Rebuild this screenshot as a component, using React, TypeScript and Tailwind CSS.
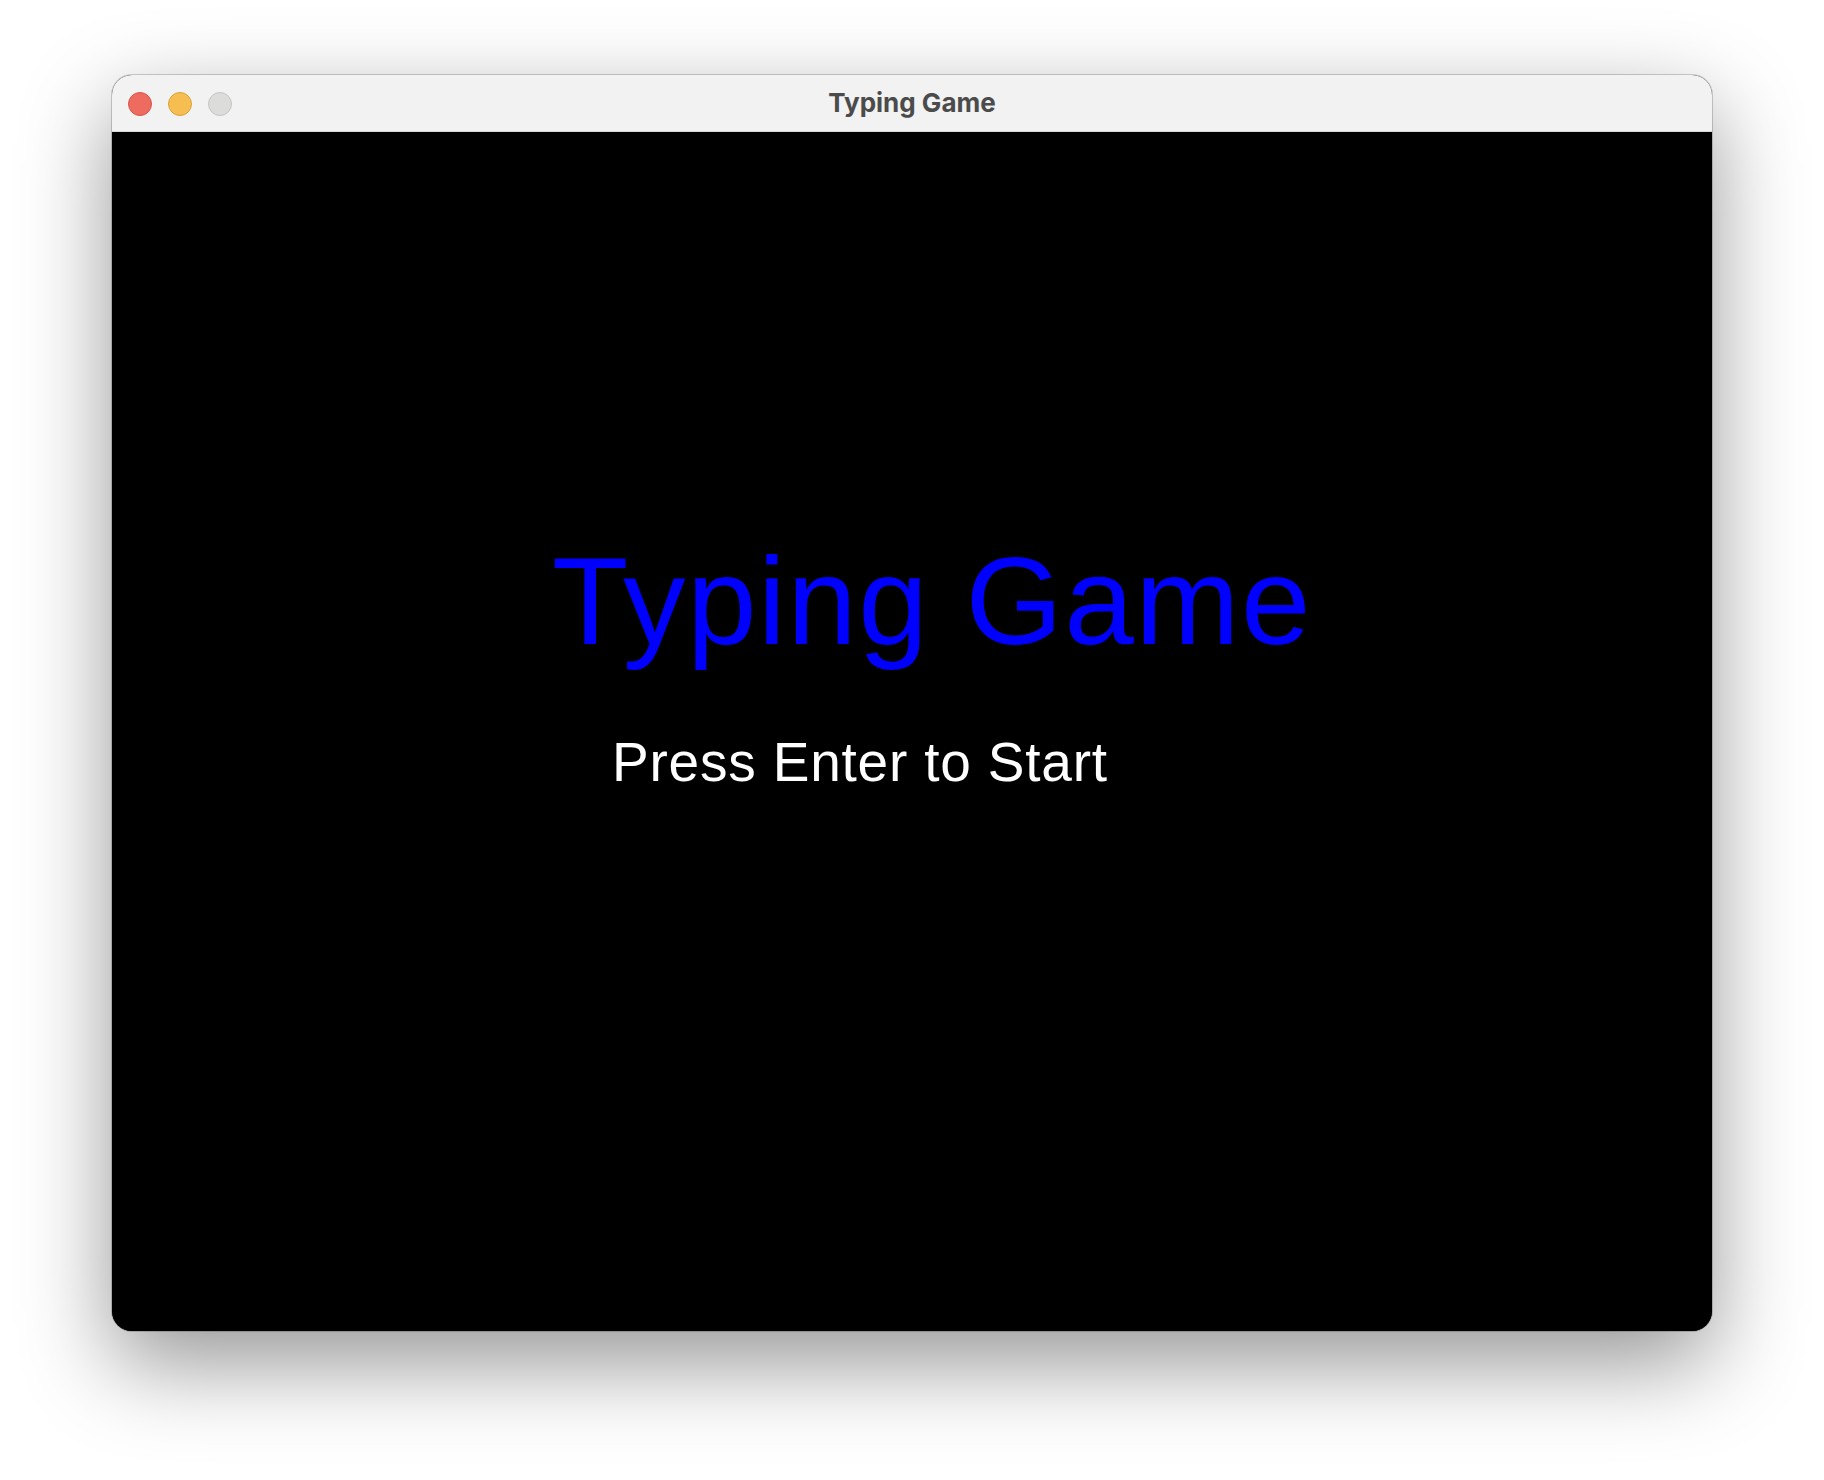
import React from "react";

export default function App() {
  return (
    <div className="w-[1824px] h-[1480px] bg-white pl-[112px] pt-[75px]">
      <div className="w-[1600px] rounded-[20px] overflow-hidden bg-black shadow-[0_0_0_1px_rgba(0,0,0,0.18),0_32px_90px_rgba(0,0,0,0.42)]">
        <div className="h-[57px] bg-[#f1f2f1] grid grid-cols-[1fr_auto_1fr] items-center border-b border-[#d6d6d6]">
          <div className="flex items-center gap-[16px] pl-[16px] pt-[1px]">
            <div className="w-[24px] h-[24px] rounded-full bg-[#ee6b60] border border-[#d5574c]" />
            <div className="w-[24px] h-[24px] rounded-full bg-[#f6be50] border border-[#d9a33c]" />
            <div className="w-[24px] h-[24px] rounded-full bg-[#dcdcdb] border border-[#c4c4c4]" />
          </div>
          <div
            className="text-[26px] font-bold text-[#4b4b4b] leading-none"
            style={{ fontFamily: "Inter, 'Noto Sans', sans-serif" }}
          >
            Typing Game
          </div>
          <div />
        </div>
        <div
          className="h-[1199px] bg-black flex flex-col items-start"
          style={{ fontFamily: "'Liberation Sans', Arial, sans-serif" }}
        >
          <div className="mt-[406px] ml-[440px] text-[125px] leading-none tracking-[1.5px] text-[#0000ff] whitespace-nowrap">
            Typing Game
          </div>
          <div className="mt-[72px] ml-[500px] text-[55px] leading-none tracking-[0.8px] text-white whitespace-nowrap">
            Press Enter to Start
          </div>
        </div>
      </div>
    </div>
  );
}
